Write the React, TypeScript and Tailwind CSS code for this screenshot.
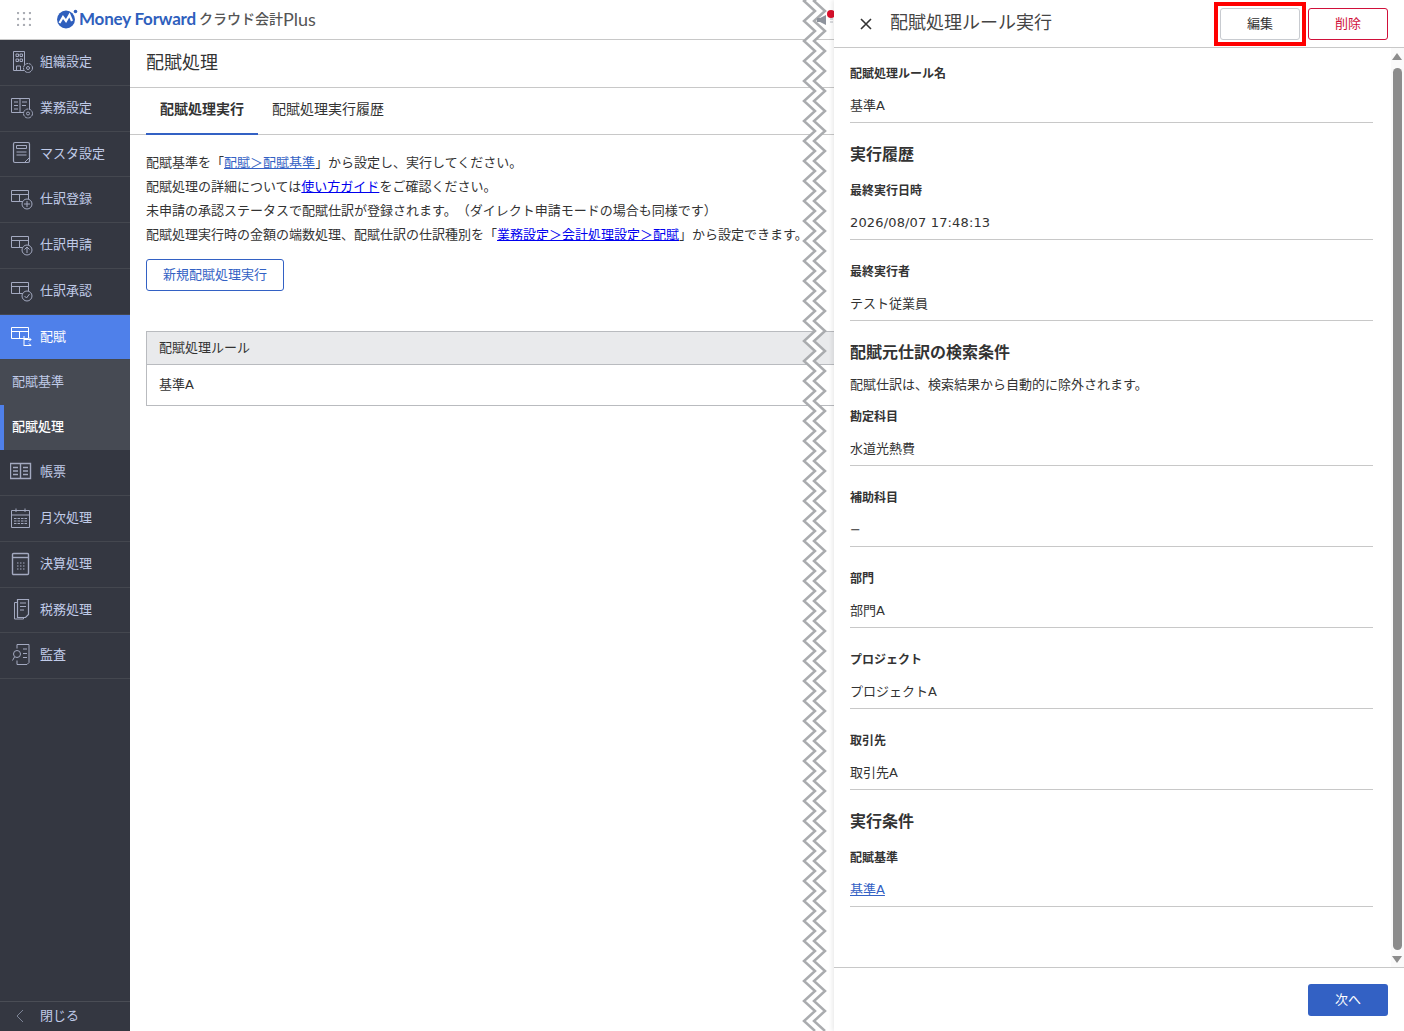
import type { ReactNode } from 'react'

const font = { fontFamily: '"DejaVu Sans", "Noto Sans CJK JP", sans-serif' }

function Svg({ children }: { children: ReactNode }) {
  return (
    <svg width="24" height="24" viewBox="0 0 24 24" fill="none" stroke="currentColor" strokeWidth="1" className="shrink-0">
      {children}
    </svg>
  )
}

const Table = () => (
  <>
    <path d="M1.5 3.5h17v11h-17z" />
    <path d="M1.5 7.5h17M9.5 7.5v7" />
  </>
)

const icons: Record<string, ReactNode> = {
  org: (
    <Svg>
      <path d="M3.5 1.5h11v19h-11z" />
      <path d="M6 4h2.5v2.5H6zM10 4h2.5v2.5H10zM6 9h2.5v2.5H6zM10 9h2.5v2.5H10zM6.5 20v-4h4v4" />
      <circle cx="18" cy="18" r="4.5" fill="#343741" strokeDasharray="3 0.6" />
      <circle cx="18" cy="18" r="1.5" />
    </Svg>
  ),
  work: (
    <Svg>
      <path d="M1.5 2.5h18v14h-18zM10 2.5v14" />
      <path d="M4 6h4M4 9.5h4M4 13h4M12 6h5M12 9.5h4" />
      <circle cx="18" cy="17.5" r="4.5" fill="#343741" strokeDasharray="3 0.6" />
      <circle cx="18" cy="17.5" r="1.5" />
    </Svg>
  ),
  master: (
    <Svg>
      <rect x="3.5" y="1.5" width="16" height="20" rx="1.5" strokeWidth="1.2" />
      <path d="M6.5 4.5h10v3h-10zM6.5 11h10M6.5 14h10" />
      <path d="M15 21l4-4" />
    </Svg>
  ),
  add: (
    <Svg>
      <Table />
      <circle cx="17" cy="17" r="5" fill="#343741" />
      <path d="M17 14v6M14 17h6" />
    </Svg>
  ),
  up: (
    <Svg>
      <Table />
      <circle cx="17" cy="17" r="5" fill="#343741" />
      <path d="M17 20v-6M14.5 16.5l2.5-2.5 2.5 2.5" />
    </Svg>
  ),
  check: (
    <Svg>
      <Table />
      <circle cx="17" cy="17" r="5" fill="#343741" />
      <path d="M14.5 17l2 2 3-4" />
    </Svg>
  ),
  alloc: (
    <Svg>
      <Table />
      <path d="M14 12v10M14 15.5h7M19 13.5l2 2-2 2M14 21.5h7M19 19.5l2 2" />
    </Svg>
  ),
  report: (
    <Svg>
      <path d="M0.5 3.5h20v15h-20zM10.500 3.500v15" strokeWidth="1.4" />
      <path d="M3 7.500h5M3 11h5M3 14.500h5M13 7.500h5M13 11h5M13 14.500h5" strokeWidth="1.4" />
    </Svg>
  ),
  month: (
    <Svg>
      <path d="M1.500 4.500h18v17h-18zM1.500 9h18" />
      <path d="M6 2.500v3.500M15 2.500v3.500" />
      <path d="M4 12.500h13M4 15h13M4 17.500h13" strokeDasharray="2.500 1" />
    </Svg>
  ),
  closing: (
    <Svg>
      <rect x="2.500" y="1.500" width="16" height="21" rx="1" strokeWidth="1.4" />
      <path d="M2.500 5.500h16" strokeWidth="1.4" />
      <path d="M7 11h8M7 14h8M7 17h8" strokeDasharray="1.500 1.500" />
    </Svg>
  ),
  tax: (
    <Svg>
      <path d="M7.500 2.500h11v15l-3 3h-8z" strokeWidth="1.2" />
      <path d="M7.500 5.500h-3v16.500h9v-1.500" />
      <path d="M10 6h6M10 9.500h6M10 13h4" strokeWidth="1.2" />
    </Svg>
  ),
  audit: (
    <Svg>
      <path d="M7 1.500h12v18l-2 2H7v-4M7 1.500v4" />
      <path d="M13 6h4M13 10.500h4M13 14.500h4" />
      <circle cx="7" cy="11" r="3.500" />
      <path d="M4.500 14l-2 3.500" />
    </Svg>
  ),
}

function NavItem({ icon, label, active }: { icon: string; label: string; active?: boolean }) {
  return (
    <div
      className={
        'flex h-[45.75px] items-center gap-[6px] border-b border-[#44474f] pb-px pl-[10px] text-[13px] ' +
        (active ? 'bg-[#4f80ea] text-white' : 'text-[#c0cbe8]')
      }
    >
      <span className={active ? 'text-white' : 'text-[#a3a9c0]'}>{icons[icon]}</span>
      {label}
    </div>
  )
}

function Sidebar() {
  return (
    <aside className="flex w-[130px] shrink-0 flex-col bg-[#343741]">
      <NavItem icon="org" label="組織設定" />
      <NavItem icon="work" label="業務設定" />
      <NavItem icon="master" label="マスタ設定" />
      <NavItem icon="add" label="仕訳登録" />
      <NavItem icon="up" label="仕訳申請" />
      <NavItem icon="check" label="仕訳承認" />
      <NavItem icon="alloc" label="配賦" active />
      <div className="flex h-[45px] items-center bg-[#464a53] pb-[2px] pl-3 text-[13px] text-[#c0cbe8]">配賦基準</div>
      <div className="flex h-[45px] items-center border-l-4 border-[#4f80ea] bg-[#464a53] pb-[2px] pl-2 text-[13px] font-medium text-white">
        配賦処理
      </div>
      <NavItem icon="report" label="帳票" />
      <NavItem icon="month" label="月次処理" />
      <NavItem icon="closing" label="決算処理" />
      <NavItem icon="tax" label="税務処理" />
      <NavItem icon="audit" label="監査" />
      <div className="mt-auto flex h-[30px] items-center border-t border-[#4a4d55] pb-px text-[13px] text-[#c0cbe8]">
        <svg width="10" height="14" viewBox="0 0 10 14" fill="none" stroke="#7d8496" className="ml-[15px] mr-[15px]">
          <path d="M8 1L2 7l6 6" />
        </svg>
        閉じる
      </div>
    </aside>
  )
}

function TopBar() {
  return (
    <header className="flex h-10 shrink-0 items-center border-b border-[#c8c8c8] bg-white pb-[2px]">
      <svg width="14" height="14" viewBox="0 0 14 14" fill="#a9acb3" className="ml-[17px]">
        {[1, 7, 13].map((y) => [1, 7, 13].map((x) => <circle key={`${x}-${y}`} cx={x} cy={y} r="1.2" />))}
      </svg>
      <svg width="22" height="20" viewBox="0 0 22 20" className="ml-[25px]">
        <circle cx="10" cy="10.500" r="9" fill="#2f5fbd" />
        <path d="M3.500 14l3.500-6 3 4 3.500-6 2.500 6" fill="none" stroke="#fff" strokeWidth="2.200" />
        <circle cx="19.500" cy="2.500" r="1.800" fill="#2f5fbd" />
      </svg>
      <span className="ml-px text-[17px] font-bold leading-none tracking-[-0.2px] text-[#2f5fbd]" style={{ fontFamily: '"Lato", sans-serif' }}>
        Money Forward
      </span>
      <span className="ml-[3px] text-[14px] font-medium leading-none text-[#555]">クラウド会計</span>
      <span className="text-[18px] leading-none text-[#555]" style={{ fontFamily: '"Lato", sans-serif' }}>
        Plus
      </span>
    </header>
  )
}

function Main() {
  return (
    <main className="min-w-0 flex-1 overflow-hidden bg-white text-[#333]">
      <h1 className="flex h-[48px] items-center border-b border-[#c8c8c8] pb-[2px] pl-4 text-[18px] font-normal">配賦処理</h1>
      <nav className="flex h-[47px] border-b border-[#c8c8c8] pl-4 text-[14px]">
        <div className="flex h-[47px] w-[112px] items-center justify-center border-b-2 border-[#3361c4] pb-[3px] font-bold">配賦処理実行</div>
        <div className="flex w-[140px] items-center justify-center pb-[3px]">配賦処理実行履歴</div>
      </nav>
      <div className="whitespace-nowrap pl-4 pt-4 text-[13px] leading-6">
        <p>
          配賦基準を「<a className="text-[#3361c4] underline">配賦＞配賦基準</a>」から設定し、実行してください。
        </p>
        <p>
          配賦処理の詳細については<a className="text-[#0000ee] underline">使い方ガイド</a>をご確認ください。
        </p>
        <p>未申請の承認ステータスで配賦仕訳が登録されます。（ダイレクト申請モードの場合も同様です）</p>
        <p>
          配賦処理実行時の金額の端数処理、配賦仕訳の仕訳種別を「<a className="text-[#0000ee] underline">業務設定＞会計処理設定＞配賦</a>」から設定できます。
        </p>
      </div>
      <button className="ml-4 mt-3 h-8 w-[138px] rounded-[3px] border border-[#3361c4] text-[13px] text-[#3361c4]">新規配賦処理実行</button>
      <div className="ml-4 mt-10 w-[800px] border border-[#b9bbbf] text-[13px]">
        <div className="flex h-[33px] items-center border-b border-[#b9bbbf] bg-[#e9eaec] pl-3">配賦処理ルール</div>
        <div className="flex h-[40px] items-center pl-3">基準A</div>
      </div>
    </main>
  )
}

function Field({ label, children }: { label: string; children: ReactNode }) {
  return (
    <div className="mb-[22px] border-b border-[#c8c8c8] pb-[6px] text-[#333]">
      <div className="h-5 text-[12px] font-bold leading-5">{label}</div>
      <div className="mt-3 h-5 text-[13px] leading-5">{children}</div>
    </div>
  )
}

function Heading({ children }: { children: ReactNode }) {
  return <h2 className="-mt-0.5 mb-[14px] h-6 text-[16px] font-bold leading-6 text-[#333]">{children}</h2>
}

function Scrollbar() {
  return (
    <div className="flex w-[13px] shrink-0 flex-col items-center bg-[#fafafa] pr-px">
      <div className="mt-[5px] h-0 w-0 border-x-[5px] border-b-[7px] border-x-transparent border-b-[#8c8c8c]" />
      <div className="mt-2 h-[882px] w-[9px] rounded-full bg-[#8c8c8c]" />
      <div className="mt-[6px] h-0 w-0 border-x-[5px] border-t-[7px] border-x-transparent border-t-[#8c8c8c]" />
    </div>
  )
}

function Panel() {
  return (
    <section className="relative flex w-[570px] shrink-0 flex-col bg-white shadow-[-2px_0_4px_rgba(0,0,0,0.08)]">
      <header className="flex h-[48px] shrink-0 items-start border-b border-[#c8c8c8] pr-4 pt-0.5">
        <svg width="12" height="12" viewBox="0 0 12 12" stroke="#333" strokeWidth="1.6" className="ml-[26px] mt-4">
          <path d="M1 1l10 10M11 1L1 11" />
        </svg>
        <div className="ml-[18px] mt-[9px] text-[18px] leading-6 text-[#444]">配賦処理ルール実行</div>
        <div className="ml-auto border-4 border-[#ff0000] p-0.5">
          <button className="block h-8 w-20 rounded-[3px] border border-[#c8cbd0] text-[13px] text-[#333]">編集</button>
        </div>
        <button className="ml-0.5 mt-[6px] h-8 w-20 rounded-[3px] border border-[#d0103a] text-[13px] text-[#d0103a]">削除</button>
      </header>
      <div className="flex min-h-0 flex-1">
        <div className="min-w-0 flex-1 pl-4 pr-[18px] pt-4">
          <Field label="配賦処理ルール名">基準A</Field>
          <Heading>実行履歴</Heading>
          <Field label="最終実行日時">
            <span className="tracking-[0.15px]">2026/08/07 17:48:13</span>
          </Field>
          <Field label="最終実行者">テスト従業員</Field>
          <h2 className="-mt-0.5 h-6 text-[16px] font-bold leading-6 text-[#333]">配賦元仕訳の検索条件</h2>
          <p className="mb-3 mt-2.5 h-5 text-[13px] leading-5 text-[#333]">配賦仕訳は、検索結果から自動的に除外されます。</p>
          <Field label="勘定科目">水道光熱費</Field>
          <Field label="補助科目">−</Field>
          <Field label="部門">部門A</Field>
          <Field label="プロジェクト">プロジェクトA</Field>
          <Field label="取引先">取引先A</Field>
          <Heading>実行条件</Heading>
          <Field label="配賦基準">
            <a className="text-[#3361c4] underline">基準A</a>
          </Field>
        </div>
        <Scrollbar />
      </div>
      <footer className="flex h-[64px] shrink-0 items-start justify-end border-t border-[#c8c8c8] pr-4 pt-4">
        <button className="h-8 w-20 rounded-[3px] bg-[#3361c4] text-[13px] text-white">次へ</button>
      </footer>
    </section>
  )
}

// torn-page marker between the main screen and the drawer
function Tear() {
  const rows = Array.from({ length: 106 }, (_, i) => i)
  const left = rows.map((i) => `${i % 2 ? 815 : 804},${i * 10 - 19}`)
  const right = rows.map((i) => `${i % 2 ? 825 : 814},${i * 10 - 19}`)
  return (
    <svg width="834" height="1031" className="pointer-events-none absolute left-0 top-0" fill="none">
      <polygon points={[...left, ...right.slice().reverse()].join(' ')} fill="#fff" />
      <polyline points={left.join(' ')} stroke="#aaacaf" strokeWidth="2.5" />
      <polyline points={right.join(' ')} stroke="#aaacaf" strokeWidth="2.5" />
      <path d="M817 18h3l6-3v10l-6-3h-3z" fill="#8e939c" />
      <path d="M830 19h3M830 22h3" stroke="#b4b7bd" />
      <circle cx="831" cy="14" r="4" fill="#d9102c" />
    </svg>
  )
}

export default function App() {
  return (
    <div className="relative flex h-[1031px] w-[1404px] overflow-hidden bg-white [text-spacing-trim:space-all]" style={font}>
      <div className="flex w-[834px] shrink-0 flex-col">
        <TopBar />
        <div className="flex min-h-0 flex-1">
          <Sidebar />
          <Main />
        </div>
      </div>
      <Tear />
      <Panel />
    </div>
  )
}
